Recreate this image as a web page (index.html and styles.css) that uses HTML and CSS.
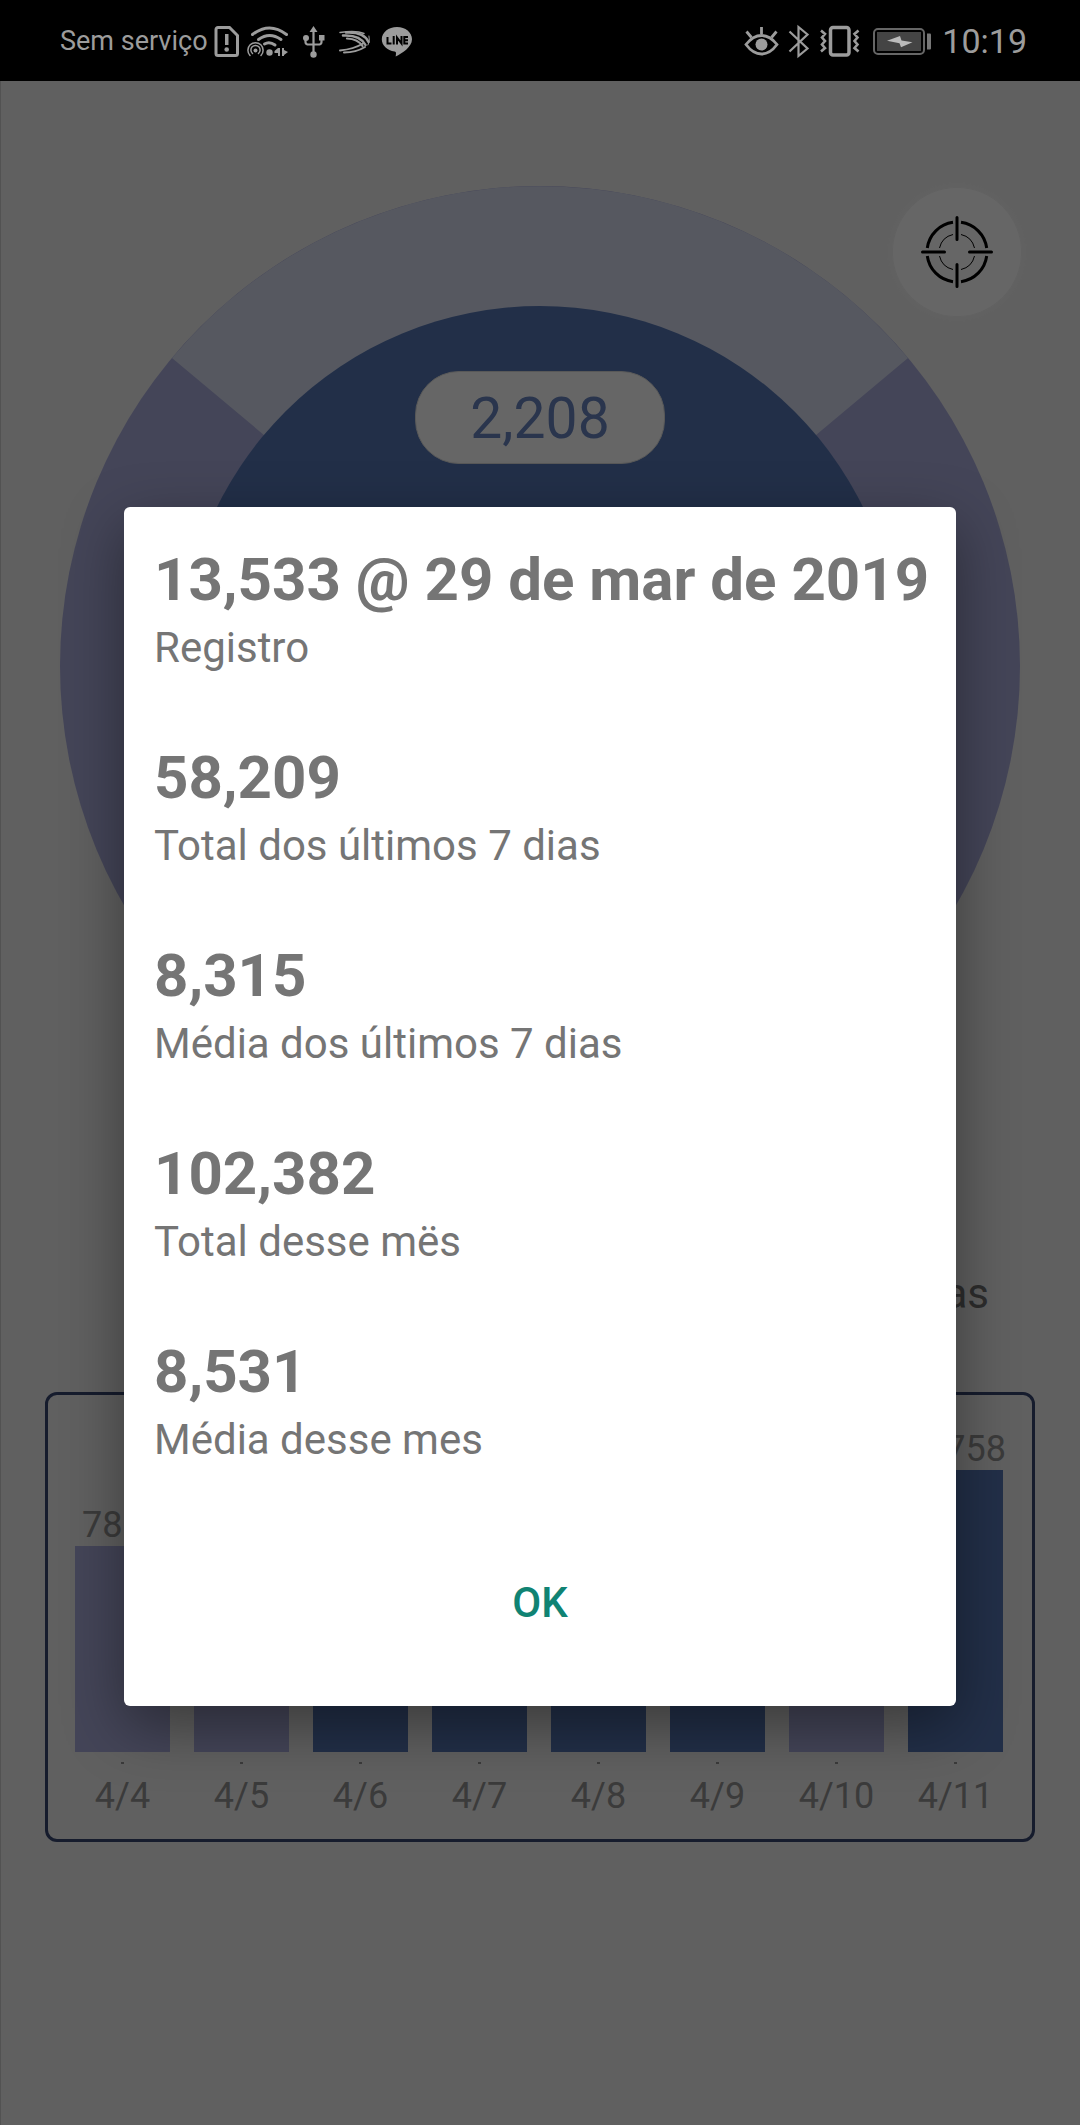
FILE: index.html
```html
<!DOCTYPE html>
<html lang="pt-BR">
<head>
<meta charset="utf-8">
<meta name="viewport" content="width=device-width, initial-scale=1">
<title>Passos</title>
<link rel="stylesheet" href="styles.css">
</head>
<body>
<header class="status">
  <div class="status-group status-left">
    <span class="carrier">Sem serviço</span>
    <svg class="icon-sim" viewBox="0 0 26 36" aria-hidden="true">
      <path d="M4 4.500h11.500l8 8v18a2 2 0 0 1-2 2h-17.500a2 2 0 0 1-2-2v-24a2 2 0 0 1 2-2z" fill="none" stroke="currentColor" stroke-width="3"/>
      <path d="M11 11h3.500v11h-3.500z" fill="currentColor"/><circle cx="12.700" cy="26.500" r="2.300" fill="currentColor"/>
    </svg>
    <svg class="icon-wifi" viewBox="0 0 44 36" aria-hidden="true">
      <g fill="none" stroke="currentColor" stroke-linecap="round">
        <path d="M6.500 11.500Q23.500-1.500 40.500 11.500" stroke-width="3"/>
        <path d="M12.500 16.500Q23.500 8.500 35 16.500" stroke-width="3"/>
        <path d="M18.500 21Q23.500 18 29 22" stroke-width="3"/>
        <path d="M4 32.500a7.600 7.600 0 1 1 11 0M6.500 30.500a4.600 4.600 0 1 1 6 0" stroke-width="1.500"/>
      </g>
      <circle cx="9.500" cy="27.500" r="2" fill="currentColor"/>
      <circle cx="23.500" cy="29.500" r="3.200" fill="currentColor"/>
      <path d="M34 25v8h-2v-3h-3.500v-2l3.500-3zM36 25h2v2l4 2-4 3v1h-2z" fill="currentColor"/>
    </svg>
    <svg class="icon-usb" viewBox="0 0 24 36" aria-hidden="true">
      <path d="M11.500 8v22M3.500 15v4q0 2 2 2.500h12q2-.5 2-2.500v-4" fill="none" stroke="currentColor" stroke-width="2.200"/>
      <path d="M11.500 3l4 6h-8zM17 12h5.500v5.500h-5.500z" fill="currentColor"/>
      <circle cx="4" cy="15" r="3" fill="currentColor"/><circle cx="11.500" cy="31.500" r="3.200" fill="currentColor"/>
    </svg>
    <svg class="icon-swift" viewBox="0 0 34 36" aria-hidden="true">
      <g fill="none" stroke="currentColor" stroke-linecap="round">
        <path d="M2 9.500Q18 7 26 10.500" stroke-width="1.500"/>
        <path d="M8 9.500Q26 8.500 30.500 19" stroke-width="2.500"/>
        <path d="M5 12.500Q22 11.500 27.500 22" stroke-width="2.500"/>
        <path d="M9 15.500Q20 16 24.500 23" stroke-width="2.200"/>
        <path d="M2 27.500Q16 26 25 20.500" stroke-width="2"/>
        <path d="M6 29.500Q18 29.500 27 24" stroke-width="2"/>
        <path d="M31 13q1.500 5-1 9" stroke-width="1"/>
      </g>
    </svg>
    <svg class="icon-line" viewBox="0 0 32 36" aria-hidden="true">
      <path d="M16 4C7.500 4 .8 9.500.8 16.300c0 6.200 5.400 11.300 12.800 12.200 2 .4 1.400 2.500 1.100 5 6.300-3 16.300-9.300 16.300-17.200C31 9.500 24.500 4 16 4z" fill="currentColor"/>
      <path d="M6.500 14v6.500h4M12.700 13v8.500M16 21.500v-7l4.500 6v-7.500M27 14h-3.700v6.500H27M23.300 17.200H27" fill="none" stroke="#000" stroke-width="2"/>
    </svg>
  </div>
  <div class="status-group status-right">
    <svg class="icon-eye" viewBox="0 0 36 36" aria-hidden="true">
      <path d="M3 21.500Q10 12.500 18.500 12.500T34 21.500Q27 31 18.500 31T3 21.500z" fill="none" stroke="currentColor" stroke-width="2.800"/>
      <circle cx="18.500" cy="21.500" r="6" fill="currentColor"/>
      <path d="M18.500 4v7M3.500 8.500l5 6M33.500 8.500l-5 6" stroke="currentColor" stroke-width="2.800"/>
    </svg>
    <svg class="icon-bt" viewBox="0 0 22 36" aria-hidden="true">
      <path d="M1.500 8.500l18 17-9 7.500V4l9 7.500-18 17" fill="none" stroke="currentColor" stroke-width="2.200"/>
    </svg>
    <svg class="icon-vib" viewBox="0 0 42 36" aria-hidden="true">
      <rect x="11.500" y="4.500" width="18.500" height="27.500" rx="2.500" fill="none" stroke="currentColor" stroke-width="3.500"/>
      <path d="M2 7.500l4 3.500-3 3.500 3 3.500-3 3.500 3 3.500-4 3.500M39.500 7.500l-4 3.500 3 3.500-3 3.500 3 3.500-3 3.500 4 3.500" fill="none" stroke="currentColor" stroke-width="2.600"/>
    </svg>
    <svg class="icon-battery" viewBox="0 0 60 36" aria-hidden="true">
      <rect x="1" y="6" width="50" height="25" rx="4" fill="none" stroke="#666" stroke-width="2"/>
      <rect x="4" y="9" width="44" height="19" fill="#444"/>
      <path d="M14 17.800L27 13l1.500 4.500 11 1.700L28 24.200l-1.500-4z" fill="#bbb"/>
      <path d="M54 10.500h3a1 1 0 0 1 1 1v14a1 1 0 0 1-1 1h-3z" fill="#777"/>
    </svg>
    <time class="clock">10:19</time>
  </div>
</header>

<main class="app">
  <section class="ring">
    <svg class="ring-chart" viewBox="0 0 960 960" aria-hidden="true">
      <circle class="ring-done" cx="480" cy="480" r="480"/>
      <path class="ring-left" d="M480 480L112 172A480 480 0 0 1 848 172z"/>
      <circle class="ring-core" cx="480" cy="480" r="360"/>
    </svg>
    <output class="steps">2,208</output>
  </section>
  <button class="target" type="button" aria-label="Meta">
    <svg class="target-icon" viewBox="0 0 74 74" aria-hidden="true">
      <g fill="none" stroke="#000">
        <path d="M41 7.300A30 30 0 0 1 66.700 33M66.700 41A30 30 0 0 1 41 66.700M33 66.700A30 30 0 0 1 7.300 41M7.300 33A30 30 0 0 1 33 7.300" stroke-width="3"/>
        <path d="M41 19.500A18 18 0 0 1 54.500 33M54.500 41A18 18 0 0 1 41 54.500M33 54.500A18 18 0 0 1 19.500 41M19.500 33A18 18 0 0 1 33 19.500" stroke-width="1"/>
        <path d="M37 2.500v22M37 49.500v22M2.500 37h22M49.500 37h22" stroke-width="3" stroke-linecap="round"/>
      </g>
    </svg>
  </button>
  <p class="period">8 dias</p>
  <section class="card">
    <div class="day"><span class="value">7858</span><div class="bar" style="height:206px"></div><span class="date">4/4</span></div>
    <div class="day"><div class="bar" style="height:168px"></div><span class="date">4/5</span></div>
    <div class="day"><div class="bar goal" style="height:216px"></div><span class="date">4/6</span></div>
    <div class="day"><div class="bar goal" style="height:222px"></div><span class="date">4/7</span></div>
    <div class="day"><div class="bar goal" style="height:220px"></div><span class="date">4/8</span></div>
    <div class="day"><div class="bar goal" style="height:233px"></div><span class="date">4/9</span></div>
    <div class="day"><div class="bar" style="height:183px"></div><span class="date">4/10</span></div>
    <div class="day"><span class="value">10758</span><div class="bar goal" style="height:282px"></div><span class="date">4/11</span></div>
  </section>

  <div class="scrim">
    <section class="dialog" role="dialog" aria-modal="true" aria-label="Registro">
      <dl class="stats">
        <div class="stat"><dd>13,533 @ 29 de mar de 2019</dd><dt>Registro</dt></div>
        <div class="stat"><dd>58,209</dd><dt>Total dos últimos 7 dias</dt></div>
        <div class="stat"><dd>8,315</dd><dt>Média dos últimos 7 dias</dt></div>
        <div class="stat"><dd>102,382</dd><dt>Total desse mës</dt></div>
        <div class="stat"><dd>8,531</dd><dt>Média desse mes</dt></div>
      </dl>
      <button class="ok" type="button">OK</button>
    </section>
  </div>
</main>
</body>
</html>
```
FILE: styles.css
```css
* { box-sizing: border-box; }

body {
  margin: 0;
  min-height: 100vh;
  display: flex;
  flex-direction: column;
  background: #000;
  font-family: Roboto, "Liberation Sans", sans-serif;
}

p, dl, dd { margin: 0; }
button { border: 0; padding: 0; font-family: inherit; }

/* Status bar */
.status {
  height: 81px;
  padding: 0 53px 0 60px;
  display: flex;
  justify-content: space-between;
  align-items: center;
  background: #000;
  color: #9c9c9c;
}
.status-group { display: flex; align-items: center; }
.status-left svg, .status-right svg { height: 36px; flex: none; }
.carrier { font-size: 27px; line-height: 36px; margin-right: 6px; }
.icon-sim { width: 26px; margin-right: 6px; }
.icon-wifi { width: 44px; margin-right: 12px; }
.icon-usb { width: 24px; margin-right: 12px; }
.icon-swift { width: 34px; margin-right: 9px; }
.icon-line { width: 32px; }
.icon-eye { width: 36px; margin-right: 9px; }
.icon-bt { width: 22px; margin-right: 9px; }
.icon-vib { width: 42px; margin-right: 12px; }
.icon-battery { width: 60px; margin-right: 9px; }
.clock { font-size: 34px; line-height: 36px; }

/* Main screen */
.app {
  position: relative;
  flex: 1;
  padding-bottom: 60px;
  background: #f0f0f0;
  border-left: 1px solid #ccc;
}

.ring {
  display: grid;
  justify-items: center;
  padding: 105px 60px 0 59px;
}
.ring-chart { grid-area: 1 / 1; width: 100%; display: block; }
.ring-done { fill: #aaacdc; }
.ring-left { fill: #d7dcf0; }
.ring-core { fill: #5576b4; }
.steps {
  grid-area: 1 / 1;
  align-self: start;
  margin-top: 185px;
  width: 250px;
  padding-top: 2px;
  border: 1px solid #ddd;
  border-radius: 44px;
  background: #fff;
  color: #6a86c0;
  font-size: 57px;
  line-height: 89px;
  text-align: center;
}

.target {
  position: absolute;
  top: 107px;
  right: 59px;
  width: 128px;
  height: 128px;
  border-radius: 50%;
  display: grid;
  place-items: center;
  background: #fff;
  box-shadow: 0 0 10px 2px #f6f6f6;
}
.target-icon { width: 74px; height: 74px; }

.period {
  margin: 120px 91px 70px;
  text-align: right;
  font-size: 42px;
  line-height: 56px;
  color: #707070;
}

.card {
  margin: 0 45px 0 44px;
  padding: 33px 17px 22px 15px;
  border: 3px solid #374670;
  border-radius: 12px;
  display: flex;
  align-items: flex-end;
  color: #949494;
  font-size: 36px;
  line-height: 42px;
}
.day {
  flex: 1 1 0;
  min-width: 0;
  display: flex;
  flex-direction: column;
  align-items: center;
}
.bar { width: 80%; background: #aaacdc; }
.bar.goal { background: #5576b4; }
.date { display: flex; flex-direction: column; align-items: center; }
.date::before {
  content: "";
  width: 3px;
  height: 2px;
  margin: 10px 0 11px;
  background: currentColor;
}

/* Dialog */
.scrim {
  position: absolute;
  inset: 0 0 0 -1px;
  display: grid;
  grid-template-columns: minmax(0, 1fr);
  align-items: center;
  padding: 6px 124px 0;
  background: rgba(0, 0, 0, 0.6);
}
.dialog {
  padding: 38px 30px 49px;
  display: flex;
  flex-direction: column;
  border-radius: 6px;
  background: #fff;
  color: #757575;
  box-shadow: 0 20px 60px rgba(0, 0, 0, 0.4);
}
.stats { display: grid; gap: 70px; }
.stat { display: grid; gap: 8px; }
.stat dd { font-size: 60px; line-height: 70px; font-weight: 700; white-space: nowrap; }
.stat dt { font-size: 42px; line-height: 50px; }
.ok {
  height: 108px;
  margin-top: 84px;
  background: none;
  color: #108373;
  font-size: 42px;
  font-weight: 500;
}
```
